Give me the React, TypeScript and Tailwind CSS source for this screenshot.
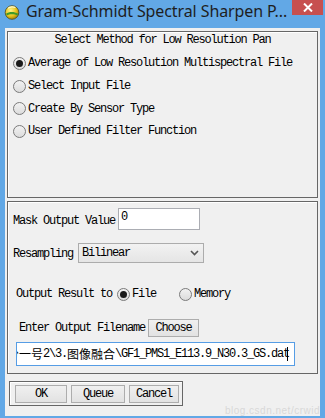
import React from "react";

const mono = "font-['Liberation_Mono','Noto_Sans_CJK_SC',monospace] text-[12px] tracking-[-1.2px] text-black";
const cjk = "font-['Noto_Sans_CJK_SC',sans-serif] text-[12px] tracking-normal";

const Radio = ({ checked }: { checked?: boolean }) => (
	<span className="flex h-[13px] w-[13px] shrink-0 items-center justify-center rounded-full border border-[#7a7a7a] bg-gradient-to-b from-[#f2f2f2] to-[#dcdcdc]">
		{checked && <span className="h-[7px] w-[7px] rounded-full bg-[#1a1a1a]" />}
	</span>
);

const RadioRow = ({ label, checked }: { label: string; checked?: boolean }) => (
	<div className="flex h-[22.7px] items-center gap-[2px] pl-[5px]">
		<Radio checked={checked} />
		<span className={mono}>{label}</span>
	</div>
);

const Btn = ({ label, w }: { label: string; w: string }) => (
	<div
		className={`flex h-[18px] ${w} items-center justify-center border border-[#adadad] bg-gradient-to-b from-[#f0f0f0] to-[#e2e2e2] ${mono}`}
	>
		{label}
	</div>
);

const EnviIcon = () => (
	<svg width="16" height="16" viewBox="0 0 16 16">
		<defs>
			<radialGradient id="g" cx="0.4" cy="0.35" r="0.7">
				<stop offset="0" stopColor="#fff48a" />
				<stop offset="0.6" stopColor="#e7c21a" />
				<stop offset="1" stopColor="#9a7a08" />
			</radialGradient>
		</defs>
		<circle cx="8" cy="8.5" r="6.8" fill="url(#g)" stroke="#4a4a20" strokeWidth="0.8" />
		<path d="M2.2 9.5 C5 7.5 10 7.2 14 9.5 L13.6 11.5 C10 9.6 5.5 9.8 2.6 11.6 Z" fill="#3f9a2a" />
		<path d="M4 4.2 C6 2.6 9.5 2.4 11.5 3.6" stroke="#fffbd0" strokeWidth="1.1" fill="none" />
	</svg>
);

export default function App() {
	return (
		<div className="flex h-[418px] w-[325px] flex-col bg-[#62a8e6]">
			{/* title bar */}
			<div className="flex h-[28px] shrink-0 items-start">
				<div className="ml-[4px] mt-[4px]">
					<EnviIcon />
				</div>
				<div className="ml-[6px] mt-[1px] font-['Noto_Sans',sans-serif] text-[16px] leading-[21px] tracking-[-0.1px] text-[#1e1e1e]">
					Gram-Schmidt Spectral Sharpen P...
				</div>
				<div className="flex-1" />
				<div className="mr-[2px] flex h-[15px] w-[31px] items-center justify-center bg-[#c75050]">
					<svg width="10" height="9" viewBox="0 0 10 9">
						<path d="M1 0.5 L9 8.5 M9 0.5 L1 8.5" stroke="#fff" strokeWidth="2" />
					</svg>
				</div>
			</div>

			{/* client area */}
			<div className="mx-[5px] mb-[9px] flex flex-1 flex-col bg-[#f0f0f0] px-[2px] pt-[3px]">
				{/* method group */}
				<div className="flex h-[167px] flex-col border border-[#666] shadow-[inset_1px_1px_0_#fff]">
					<div className={`mt-0 text-center ${mono} leading-[16px]`}>
						Select Method for Low Resolution Pan
					</div>
					<div className="mt-[4px] flex flex-col">
						<RadioRow label="Average of Low Resolution Multispectral File" checked />
						<RadioRow label="Select Input File" />
						<RadioRow label="Create By Sensor Type" />
						<RadioRow label="User Defined Filter Function" />
					</div>
				</div>

				{/* options group */}
				<div className="mt-[3px] flex h-[173px] flex-col border border-[#666] shadow-[inset_1px_1px_0_#fff]">
					<div className="mt-[6px] flex items-center pl-[5px]">
						<span className={`mt-[4px] ${mono}`}>Mask Output Value</span>
						<div className={`ml-[3px] h-[22px] w-[82px] border border-[#abadb3] bg-white pl-[2px] leading-[16px] ${mono}`}>
							0
						</div>
					</div>
					<div className="mt-[13px] flex items-center pl-[5px]">
						<span className={`mt-[2px] ${mono}`}>Resampling</span>
						<div className={`ml-[5px] flex h-[20px] w-[126px] items-center justify-between border border-[#acacac] bg-gradient-to-b from-[#f2f2f2] to-[#e5e5e5] pl-[3px] pr-[4px] ${mono}`}>
							<span>Bilinear</span>
							<svg width="9" height="6" viewBox="0 0 9 6">
								<path d="M1 1 L4.5 4.5 L8 1" stroke="#555" strokeWidth="1.6" fill="none" />
							</svg>
						</div>
					</div>
					<div className="mt-[22px] flex items-center pl-[8px]">
						<span className={mono}>Output Result to</span>
						<span className="ml-[5px]">
							<Radio checked />
						</span>
						<span className={`ml-[2px] ${mono}`}>File</span>
						<span className="ml-[23px]">
							<Radio />
						</span>
						<span className={`ml-[2px] ${mono}`}>Memory</span>
					</div>
					<div className="mt-[16px] flex items-center pl-[11px]">
						<span className={mono}>Enter Output Filename</span>
						<div className="ml-[3px]">
							<Btn label="Choose" w="w-[51px]" />
						</div>
					</div>
					<div className="ml-[8px] mt-[5px] flex h-[24px] w-[279px] items-center overflow-hidden border border-[#569de5] bg-white">
						<span className={`ml-[-10px] whitespace-nowrap ${cjk}`}>分一号</span>
						<span className={`whitespace-nowrap ${mono}`}>2\3.</span>
						<span className={`whitespace-nowrap ${cjk}`}>图像融合</span>
						<span className={`whitespace-nowrap ${mono}`}>\GF1_PMS1_E113.9_N30.3_GS.da</span>
						<span className={`whitespace-nowrap ${mono}`}>t</span>
						<span className="ml-[-2px] h-[14px] w-[1px] bg-black" />
					</div>
				</div>

				{/* button group */}
				<div className="mt-[7px] flex items-end justify-between">
					<div className="ml-[2px] flex h-[25px] w-[174px] items-center gap-[4px] border border-[#666] pl-[5px] shadow-[inset_1px_1px_0_#fff]">
						<Btn label="OK" w="w-[52px]" />
						<Btn label="Queue" w="w-[54px]" />
						<Btn label="Cancel" w="w-[50px]" />
					</div>
				</div>
				<div className="flex-1" />
				<div className="mr-[-2px] text-right font-['Liberation_Sans',sans-serif] text-[10px] leading-[10px] tracking-[0.5px] text-[#d8d8d8]">
					blog.csdn.net/crwid
				</div>
			</div>
		</div>
	);
}
